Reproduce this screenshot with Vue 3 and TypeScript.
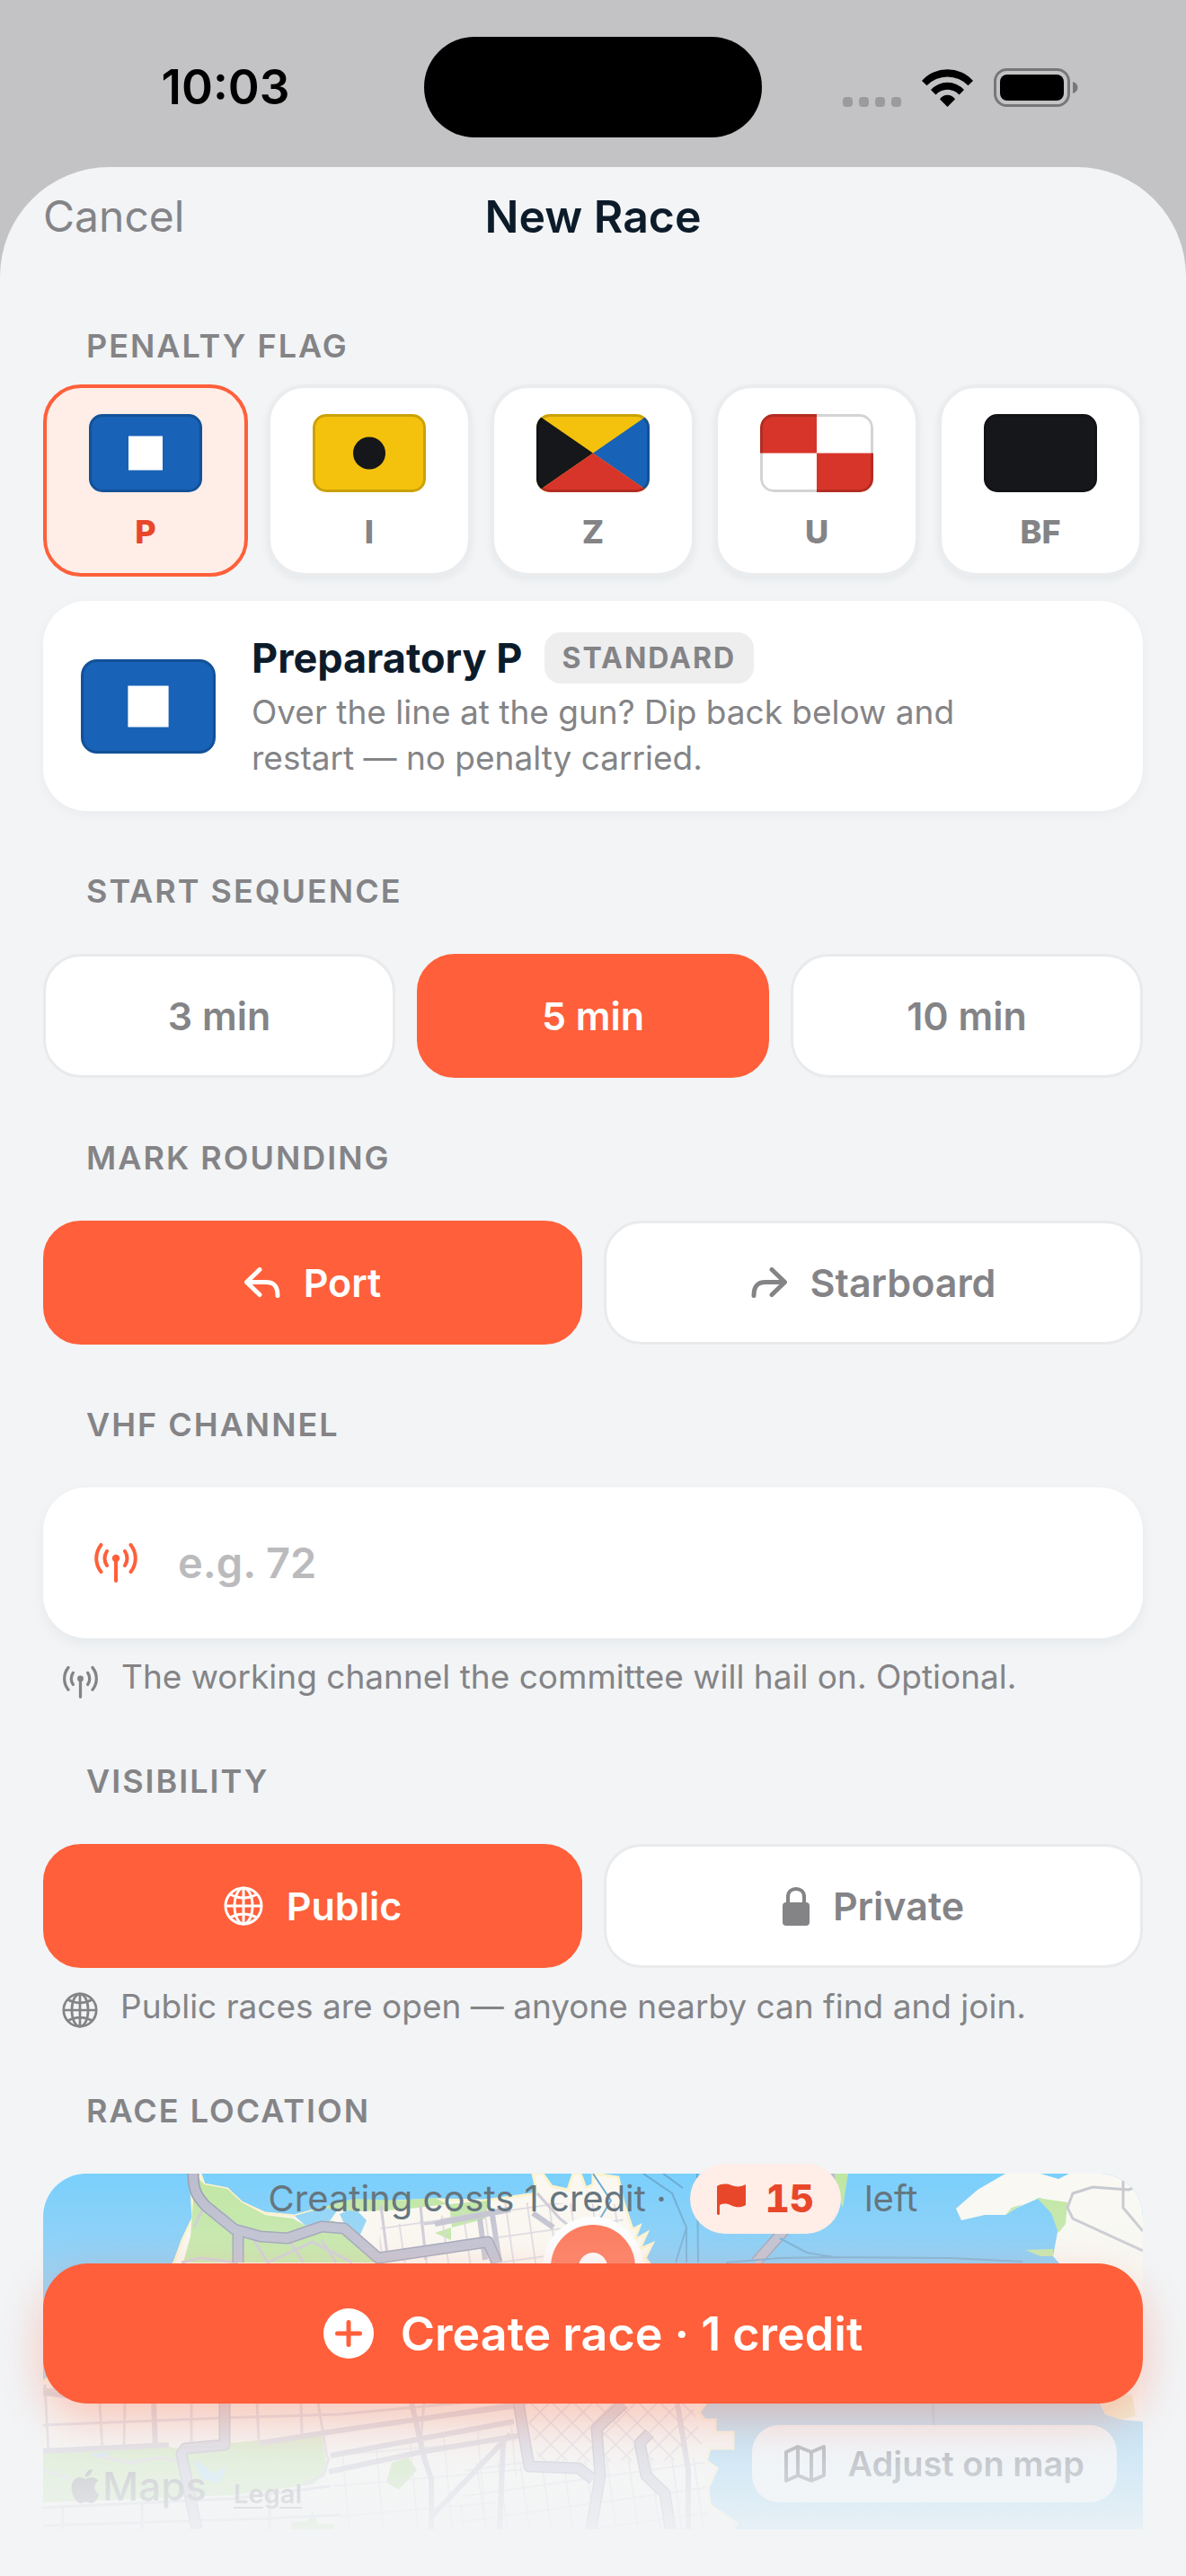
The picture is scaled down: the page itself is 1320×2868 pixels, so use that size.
<script setup lang="ts">
import { computed, ref } from 'vue'

interface Shape { d: string; fill: string }
interface Flag { code: string; title: string; badge: string; text: string; ground: string; shapes: Shape[] }

const BLUE = '#1862b7'
const YELLOW = '#f4c20d'
const RED = '#d8352a'
const BLACK = '#15171a'

const flags: Flag[] = [
  {
    code: 'P', title: 'Preparatory P', badge: 'STANDARD', ground: BLUE,
    text: 'Over the line at the gun? Dip back below and restart — no penalty carried.',
    shapes: [{ d: 'M44 24.500H82V62.500H44Z', fill: '#fff' }],
  },
  {
    code: 'I', title: 'India I', badge: 'ROUND THE ENDS', ground: YELLOW,
    text: 'Over in the last minute? Round an end of the line before starting.',
    shapes: [{ d: 'M45 43.500a18 18 0 1 0 36 0a18 18 0 1 0 -36 0Z', fill: BLACK }],
  },
  {
    code: 'Z', title: 'Zulu Z', badge: '20% PENALTY', ground: YELLOW,
    text: 'In the triangle in the last minute? A scoring penalty applies.',
    shapes: [
      { d: 'M0 0L63 43.500L0 87Z', fill: BLACK },
      { d: 'M126 0L63 43.500L126 87Z', fill: BLUE },
      { d: 'M0 87L63 43.500L126 87Z', fill: RED },
    ],
  },
  {
    code: 'U', title: 'Uniform U', badge: 'DISQUALIFIED', ground: '#fff',
    text: 'In the triangle in the last minute? Disqualified unless restarted.',
    shapes: [{ d: 'M0 0H63V43.500H0Z', fill: RED }, { d: 'M63 43.500H126V87H63Z', fill: RED }],
  },
  {
    code: 'BF', title: 'Black flag', badge: 'STRICT', ground: BLACK,
    text: 'In the triangle in the last minute? Disqualified, even after a restart.',
    shapes: [],
  },
]

const minutes = [3, 5, 10]
const flagCode = ref('P')
const sequence = ref(5)
const rounding = ref<'port' | 'starboard'>('port')
const visibility = ref<'public' | 'private'>('public')
const channel = ref('')
const credits = ref(15)

const activeFlag = computed(() => flags.find(f => f.code === flagCode.value) ?? flags[0])
const visibilityHint = computed(() =>
  visibility.value === 'public'
    ? 'Public races are open — anyone nearby can find and join.'
    : 'Private races are joined by invitation only.')
</script>

<template>
  <div class="screen">
    <header class="status">
      <div class="status-left"><span class="clock">10:03</span></div>
      <div class="island"></div>
      <div class="status-right">
        <svg class="dots" viewBox="0 0 65 11" aria-hidden="true">
          <rect v-for="n in 4" :key="n" :x="(n - 1) * 18" y="0" width="11" height="11" rx="4" fill="#9b9b9d" />
        </svg>
        <svg class="wifi" viewBox="0 0 57 42" aria-hidden="true">
          <path d="M0 13A38 38 0 0 1 57 13L51.500 18.300A32 32 0 0 0 5.500 18.300Z" />
          <path d="M10 23A25 25 0 0 1 47 23L41.500 28.500A17.500 17.500 0 0 0 15.500 28.500Z" />
          <path d="M20 33.500A10 10 0 0 1 37 33.500L28.500 42Z" />
        </svg>
        <svg class="battery" viewBox="0 0 94 43" aria-hidden="true">
          <rect x="1.500" y="1.500" width="82" height="40" rx="13" fill="none" stroke="#77777a" stroke-width="3" />
          <rect x="7" y="7" width="71" height="29" rx="8" />
          <path d="M88 15C91.500 16 93.500 18.500 93.500 21.500S91.500 27 88 28Z" fill="#77777a" />
        </svg>
      </div>
    </header>

    <main class="sheet">
      <div class="titlebar">
        <button type="button" class="cancel">Cancel</button>
        <h1>New Race</h1>
      </div>

      <div class="body">
        <h2 id="flag-label">PENALTY FLAG</h2>
        <div class="flags" role="group" aria-labelledby="flag-label">
          <button
            v-for="f in flags" :key="f.code" type="button" class="flag-card"
            :class="{ on: f.code === flagCode }" :aria-pressed="f.code === flagCode" @click="flagCode = f.code"
          >
            <span class="flag">
              <svg viewBox="0 0 126 87" preserveAspectRatio="none" aria-hidden="true">
                <rect width="126" height="87" :fill="f.ground" />
                <path v-for="s in f.shapes" :key="s.d" :d="s.d" :fill="s.fill" />
              </svg>
            </span>
            <span class="flag-code">{{ f.code }}</span>
          </button>
        </div>

        <section class="info">
          <span class="flag large">
            <svg viewBox="0 0 126 87" preserveAspectRatio="none" aria-hidden="true">
              <rect width="126" height="87" :fill="activeFlag.ground" />
              <path v-for="s in activeFlag.shapes" :key="s.d" :d="s.d" :fill="s.fill" />
            </svg>
          </span>
          <div class="info-text">
            <div class="info-head">
              <h3>{{ activeFlag.title }}</h3>
              <span class="badge">{{ activeFlag.badge }}</span>
            </div>
            <p>{{ activeFlag.text }}</p>
          </div>
        </section>

        <h2 id="seq-label" class="spaced">START SEQUENCE</h2>
        <div class="options" role="group" aria-labelledby="seq-label">
          <button
            v-for="m in minutes" :key="m" type="button" class="option"
            :class="{ on: m === sequence }" :aria-pressed="m === sequence" @click="sequence = m"
          >{{ m }} min</button>
        </div>

        <h2 id="round-label" class="spaced">MARK ROUNDING</h2>
        <div class="options" role="group" aria-labelledby="round-label">
          <button
            type="button" class="option" :class="{ on: rounding === 'port' }"
            :aria-pressed="rounding === 'port'" @click="rounding = 'port'"
          >
            <svg class="turn" viewBox="0 0 40 34" aria-hidden="true">
              <path d="M17 2.500L2.500 16.500L17 30.500M3 16.500H24C33 16.500 37 21 37 31.500" />
            </svg>
            Port
          </button>
          <button
            type="button" class="option" :class="{ on: rounding === 'starboard' }"
            :aria-pressed="rounding === 'starboard'" @click="rounding = 'starboard'"
          >
            <svg class="turn" viewBox="0 0 40 34" aria-hidden="true">
              <path d="M23 2.500L37.500 16.500L23 30.500M37 16.500H16C7 16.500 3 21 3 31.500" />
            </svg>
            Starboard
          </button>
        </div>

        <h2 class="spaced"><label for="vhf">VHF CHANNEL</label></h2>
        <div class="field">
          <svg class="antenna" viewBox="0 0 50 44" aria-hidden="true">
            <circle cx="25" cy="17" r="4.200" />
            <path d="M25 17V42M8.500 2A24 24 0 0 0 8.500 32M15 9A15 15 0 0 0 15 25M41.500 2A24 24 0 0 1 41.500 32M35 9A15 15 0 0 1 35 25" />
          </svg>
          <input id="vhf" v-model="channel" type="text" inputmode="numeric" placeholder="e.g. 72">
        </div>
        <p class="hint">
          <svg class="antenna" viewBox="0 0 50 44" aria-hidden="true">
            <circle cx="25" cy="17" r="4.200" />
            <path d="M25 17V42M8.500 2A24 24 0 0 0 8.500 32M15 9A15 15 0 0 0 15 25M41.500 2A24 24 0 0 1 41.500 32M35 9A15 15 0 0 1 35 25" />
          </svg>
          <span>The working channel the committee will hail on. Optional.</span>
        </p>

        <h2 id="vis-label" class="spaced">VISIBILITY</h2>
        <div class="options" role="group" aria-labelledby="vis-label">
          <button
            type="button" class="option" :class="{ on: visibility === 'public' }"
            :aria-pressed="visibility === 'public'" @click="visibility = 'public'"
          >
            <svg class="globe" viewBox="0 0 44 44" aria-hidden="true">
              <circle cx="22" cy="22" r="20" />
              <ellipse cx="22" cy="22" rx="10" ry="20" />
              <path d="M22 2V42M2 22H42M7 9Q22 17 37 9M7 35Q22 27 37 35" />
            </svg>
            Public
          </button>
          <button
            type="button" class="option" :class="{ on: visibility === 'private' }"
            :aria-pressed="visibility === 'private'" @click="visibility = 'private'"
          >
            <svg class="lock" viewBox="0 0 30 43" aria-hidden="true">
              <rect y="17" width="30" height="26" rx="4" fill="currentColor" />
              <path d="M6 19V11C6 5 10 2 15 2S24 5 24 11V19" fill="none" stroke="currentColor" stroke-width="4" />
            </svg>
            Private
          </button>
        </div>
        <p class="hint">
          <svg class="globe" viewBox="0 0 44 44" aria-hidden="true">
            <circle cx="22" cy="22" r="20" />
            <ellipse cx="22" cy="22" rx="10" ry="20" />
            <path d="M22 2V42M2 22H42M7 9Q22 17 37 9M7 35Q22 27 37 35" />
          </svg>
          <span>{{ visibilityHint }}</span>
        </p>

        <h2 class="spaced">RACE LOCATION</h2>
        <section class="map">
          <svg class="map-art" viewBox="0 0 1224 396" preserveAspectRatio="xMidYMid slice" aria-hidden="true">
            <defs>
              <linearGradient id="sea" x1="0" y1="0" x2="0" y2="1">
                <stop offset="0" stop-color="#70cdfd" />
                <stop offset="0.300" stop-color="#72c3f4" />
                <stop offset="1" stop-color="#74c8f2" />
              </linearGradient>
              <pattern id="hatch" width="17" height="17" patternUnits="userSpaceOnUse" patternTransform="rotate(45)">
                <path d="M0 0H17M0 0V17" fill="none" stroke="#cdc0ce" stroke-width="3" />
              </pattern>
              <pattern id="blocks" width="24" height="28" patternUnits="userSpaceOnUse" patternTransform="rotate(-8)">
                <path d="M0 0H24M0 0V28" fill="none" stroke="#d4d0da" stroke-width="3" />
              </pattern>
              <pattern id="south" width="38" height="34" patternUnits="userSpaceOnUse" patternTransform="rotate(-5)">
                <path d="M0 0H38M0 0V34" fill="none" stroke="#c6c4d2" stroke-width="3" />
              </pattern>
            </defs>
            <rect width="1224" height="396" fill="url(#sea)" />

            <!-- peninsula -->
            <path
              d="M164 0H175L179 12L205 17L221 32L247 44L280 47L301 41L331 36L373 32L436 29L491 30L550 22L545 0H556L566 14L584 18L590 0H598L604 16L612 12L612 0L640 4L646 32L656 62L664 58L658 74L672 66L664 84L678 78L670 94L690 120L735 230L738 255L730 266L736 274H748V288H768V306H742L738 320L750 328L740 350L742 369L772 389L768 396H0V232L60 180L146 99L155 74L167 49Z"
              fill="#fcf8f0" stroke="#fff3c8" stroke-width="3"
            />
            <path d="M330 45L346 38L360 52L352 70L338 62Z" fill="#84cff6" />
            <path d="M280 47L301 41L331 36L318 54L292 58Z" fill="#84cff6" />

            <!-- parks -->
            <path
              d="M169 0L179 12L205 17L221 32L247 46L278 50L296 60L322 52L340 62L352 78L373 99H156L164 70L167 30Z"
              fill="#bce59c"
            />
            <path d="M309 38L345 28L395 30L436 27L450 34L400 40L350 42Z" fill="#bce59c" />
            <path d="M452 34L495 30L493 50L455 60Z" fill="#bce59c" />
            <path d="M436 66L454 60V74Z" fill="#bce59c" />
            <path d="M0 312L140 304L160 308L208 300L310 290L316 332L300 346L210 358L0 366Z" fill="#b9e39b" />
            <path d="M388 322L406 316L416 330L396 352L382 344Z" fill="#a9dc85" />
            <path d="M300 376L306 390H324V396H276V388L294 387Z" fill="#a9dc85" />
            <path d="M168 318L190 334L204 326L196 344L176 340ZM52 312L76 310L66 318Z" fill="#9fd8f5" />

            <!-- fine streets -->
            <path d="M375 60L520 32L640 34L652 70L680 130L374 96Z" fill="url(#blocks)" />
            <path d="M535 256H722L734 300L700 320H552Z" fill="url(#hatch)" />
            <path d="M470 322L736 316L740 396H462Z" fill="url(#blocks)" />
            <path d="M318 312L520 276L536 326L478 396H330Z" fill="url(#south)" opacity="0.700" />
            <g fill="none" stroke="#c9c6d2" stroke-width="3">
              <path d="M2 235L6 312M63 255L66 308M91 255L90 306M165 255V302M238 255L240 300M287 255L288 290M306 255L316 316M424 255L420 300" />
              <path d="M0 280L200 272L330 268L540 248M242 299L524 256M0 240L60 244" />
              <path d="M0 372L210 362L320 348M0 392L250 384L330 380M22 370V396M110 366V396M252 352V396" />
              <path d="M0 330L30 340M60 314L96 322L130 316L160 322M318 316L312 336L290 346" />
              <path d="M376 36L384 98M420 36L426 96M442 52L520 38M424 56L442 54M230 66L250 99M272 72L290 99M310 74L326 99M250 99L300 76L344 99M181 36L205 48L216 62M154 99L175 94L217 99" />
              <path d="M168 60L181 32M550 22L575 50L600 70" />
            </g>
            <g fill="none" stroke="#bdbccb" stroke-width="6">
              <path d="M123 255L125 306M0 244L48 250M0 309L140 302" />
              <path d="M242 300L330 286L528 258M320 314L524 276M318 332L420 310L540 290" />
              <path d="M410 255L424 316L432 340V396M432 382L520 290M512 300L508 396" />
              <path d="M486 50L492 96M500 46L508 99M436 56L520 40M545 44L568 60" />
              <path d="M706 256L718 330V396" />
            </g>

            <!-- highways -->
            <g fill="none" stroke-linejoin="round">
              <g stroke="#9296ad" stroke-width="13">
                <path d="M167 0C167 20 172 26 181 36L213 62L242 70L272 72L310 59L335 61L373 94L495 76L505 99" />
                <path d="M217 66V99M202 255V302L158 306L154 312L171 396M529 255L541 326L596 328L612 340M646 256L616 284L620 336L610 396M675 289L664 300L671 336L692 356L698 396M881 0L793 99" />
              </g>
              <g stroke="#b6b8ca" stroke-width="10">
                <path d="M167 0C167 20 172 26 181 36L213 62L242 70L272 72L310 59L335 61L373 94L495 76L505 99" />
                <path d="M217 66V99M202 255V302L158 306L154 312L171 396M529 255L541 326L596 328L612 340M646 256L616 284L620 336L610 396M675 289L664 300L671 336L692 356L698 396M881 0L793 99" />
              </g>
            </g>

            <!-- ferry routes -->
            <path
              d="M612 0L632 30L614 60M668 0L700 22L716 60V99M690 0L712 16M728 0L729 99M716 60L704 99M820 72L850 88L880 93L1010 94L1090 98M760 99L820 94L880 93M990 255L992 290"
              fill="none" stroke="#5fa3cf" stroke-width="2"
            />

            <!-- east bay -->
            <path d="M881 0H896L894 12L890 38L884 24Z" fill="#bce59c" />
            <path
              d="M1071 0L1040 18L1016 39L1022 52L1048 46L1071 46L1084 38L1109 27L1122 32L1130 60L1124 92L1140 110L1176 255L1182 268L1200 274L1224 276V0H1142L1130 6L1110 0Z"
              fill="#faf9f2"
            />
            <path d="M1071 46L1078 38L1090 34ZM1106 27L1140 32L1138 56L1130 66L1122 44ZM1093 85L1124 84V92H1110Z" fill="#bce59c" />
            <path d="M1176 250L1212 246L1216 270L1200 274L1182 268Z" fill="#eee0a4" />
            <path d="M1202 8V38L1224 64M1224 12L1208 18L1168 15L1146 22L1140 38L1146 50L1224 86" fill="none" stroke="#c3c4cc" stroke-width="3" />

            <!-- pin -->
            <circle cx="612" cy="104" r="56" fill="#fff" />
            <circle cx="612" cy="104" r="47" fill="#ff5f3a" />
            <circle cx="612" cy="104" r="16" fill="#fff" />
          </svg>
          <div class="map-credit">
            <span class="maps">
              <svg viewBox="0 0 24 24" aria-hidden="true">
                <path d="M12.152 6.896c-.948 0-2.415-1.078-3.960-1.040-2.040.027-3.910 1.183-4.961 3.014-2.117 3.675-.546 9.103 1.519 12.090 1.013 1.454 2.208 3.090 3.792 3.039 1.520-.065 2.090-.987 3.935-.987 1.831 0 2.350.987 3.960.948 1.637-.026 2.676-1.480 3.676-2.948 1.156-1.688 1.636-3.325 1.662-3.415-.039-.013-3.182-1.221-3.220-4.857-.026-3.040 2.480-4.494 2.597-4.559-1.429-2.090-3.623-2.324-4.390-2.376-2-.156-3.675 1.090-4.610 1.090zM15.530 3.830c.843-1.012 1.400-2.427 1.245-3.830-1.207.052-2.662.805-3.532 1.818-.780.896-1.454 2.338-1.273 3.714 1.338.104 2.715-.688 3.559-1.701" />
              </svg>
              Maps
            </span>
            <a href="#legal">Legal</a>
          </div>
          <button type="button" class="adjust">
            <svg viewBox="0 0 46 42" aria-hidden="true">
              <path d="M2 8L15 2L30 8L44 2V34L30 40L15 34L2 40ZM15 2V34M30 8V40" />
            </svg>
            Adjust on map
          </button>
        </section>
      </div>
    </main>

    <footer class="dock">
      <p class="cost">
        <span>Creating costs 1 credit ·</span>
        <span class="credits">
          <svg viewBox="0 0 32 35" aria-hidden="true">
            <path d="M0 3C5 0 11 0 16 2S27 4 32 1V24C27 27 21 27 16 24.500S7 22 3 24V33.500A1.500 1.500 0 0 1 0 33.500Z" />
          </svg>
          {{ credits }}
        </span>
        <span>left</span>
      </p>
      <button type="button" class="create">
        <svg viewBox="0 0 56 56" aria-hidden="true">
          <circle cx="28" cy="28" r="28" fill="#fff" />
          <path d="M28 15.500V40.500M15.500 28H40.500" stroke="#ff5f3a" stroke-width="5" stroke-linecap="round" />
        </svg>
        Create race · 1 credit
      </button>
    </footer>
  </div>
</template>

<style>
body {
  margin: 0;
  background: #c3c3c5;
}
</style>

<style scoped>
.screen {
  position: relative;
  display: flex;
  flex-direction: column;
  min-height: 100vh;
  overflow: hidden;
  background: #c3c3c5;
  color: #848487;
  font-family: Inter, "Liberation Sans", sans-serif;
}
.screen *,
.screen *::after {
  box-sizing: border-box;
}
button {
  padding: 0;
  border: 0;
  background: none;
  color: inherit;
  font-family: inherit;
  cursor: pointer;
}
h1, h2, h3, p {
  margin: 0;
}
svg {
  flex: none;
  display: block;
}

/* status bar */
.status {
  display: grid;
  grid-template-columns: 1fr 376px 1fr;
  align-items: center;
  height: 186px;
  padding-top: 8px;
}
.status-left {
  padding-left: 30px;
  text-align: center;
}
.clock {
  color: #000;
  font-size: 53px;
  font-weight: 600;
  line-height: 64px;
}
.island {
  height: 112px;
  border-radius: 56px;
  background: #000;
}
.status-right {
  display: flex;
  align-items: flex-end;
  justify-content: center;
  gap: 23px;
  padding-right: 30px;
}
.dots {
  width: 65px;
  height: 11px;
}
.wifi {
  width: 57px;
  height: 42px;
}
.battery {
  width: 94px;
  height: 43px;
}

/* sheet */
.sheet {
  flex: 1;
  padding-bottom: 48px;
  border-radius: 122px 122px 0 0;
  background: #f2f4f6;
}
.titlebar {
  display: grid;
  grid-template-columns: 1fr auto 1fr;
  align-items: center;
  height: 110px;
  padding: 0 48px;
}
.cancel {
  justify-self: start;
  font-size: 48px;
  line-height: 60px;
}
h1 {
  color: #0c1b2a;
  font-size: 50px;
  font-weight: 600;
  line-height: 60px;
}
.body {
  padding: 65px 48px 0;
}
h2 {
  margin-bottom: 46px;
  padding-left: 48px;
  font-size: 36px;
  font-weight: 600;
  line-height: 48px;
  letter-spacing: 2px;
}
#flag-label {
  margin-bottom: 19px;
}
.spaced {
  margin-top: 65px;
}

/* flags */
.flags {
  display: flex;
  gap: 21px;
}
.flag-card {
  display: flex;
  flex: 1;
  flex-direction: column;
  align-items: center;
  height: 214px;
  padding-top: 29px;
  border: 4px solid #ebecee;
  border-radius: 42px;
  background: #fff;
  box-shadow: 0 4px 10px rgba(20, 30, 40, 0.050);
}
.flag-card.on {
  border-color: #ff5f3a;
  background: #ffede7;
  color: #e8472a;
  box-shadow: none;
}
.flag {
  position: relative;
  width: 126px;
  height: 87px;
  overflow: hidden;
  border-radius: 15px;
}
.flag svg {
  width: 100%;
  height: 100%;
}
.flag::after {
  position: absolute;
  inset: 0;
  border: 3px solid rgba(0, 0, 0, 0.170);
  border-radius: inherit;
  content: "";
}
.flag.large {
  flex: none;
  width: 150px;
  height: 105px;
  border-radius: 18px;
}
.flag-code {
  margin-top: 22px;
  font-size: 36px;
  font-weight: 800;
  line-height: 44px;
}
.info {
  display: flex;
  align-items: center;
  gap: 40px;
  margin-top: 27px;
  padding: 35px 42px 34px;
  border-radius: 48px;
  background: #fff;
  box-shadow: 0 4px 14px rgba(20, 30, 40, 0.040);
}
.info-head {
  display: flex;
  align-items: center;
  gap: 24px;
  margin-bottom: 6px;
}
h3 {
  color: #0c1b2a;
  font-size: 45px;
  font-weight: 700;
  line-height: 57px;
}
.badge {
  padding: 0 20px;
  border-radius: 18px;
  background: #eeeeef;
  font-size: 32px;
  font-weight: 700;
  line-height: 57px;
  letter-spacing: 2px;
}
.info p {
  max-width: 840px;
  font-size: 37px;
  line-height: 51px;
}

/* option buttons */
.options {
  display: flex;
  gap: 24px;
}
.option {
  display: flex;
  flex: 1;
  align-items: center;
  justify-content: center;
  gap: 26px;
  height: 138px;
  border: 3px solid #e9eaec;
  border-radius: 42px;
  background: #fff;
  font-size: 43px;
  font-weight: 600;
}
.option.on {
  border-color: #ff5f3a;
  background: #ff5f3a;
  color: #fff;
}
.turn {
  width: 40px;
  height: 34px;
  fill: none;
  stroke: currentColor;
  stroke-width: 5;
  stroke-linecap: round;
  stroke-linejoin: round;
}
.globe {
  width: 44px;
  height: 44px;
  fill: none;
  stroke: currentColor;
  stroke-width: 3;
}
.lock {
  width: 30px;
  height: 43px;
}
.antenna {
  width: 50px;
  height: 44px;
  fill: none;
  stroke: currentColor;
  stroke-width: 4;
  stroke-linecap: round;
}
.antenna circle {
  fill: currentColor;
  stroke: none;
}

/* channel field */
.field {
  display: flex;
  align-items: center;
  gap: 44px;
  height: 168px;
  padding: 0 56px;
  border-radius: 48px;
  background: #fff;
  box-shadow: 0 6px 16px rgba(20, 30, 40, 0.050);
  color: #ff5f3a;
}
.field input {
  flex: 1;
  min-width: 0;
  padding: 0;
  border: 0;
  outline: 0;
  background: none;
  color: #0c1b2a;
  font-family: inherit;
  font-size: 47px;
  font-weight: 600;
  line-height: 60px;
}
.field input::placeholder {
  color: #bbbbbd;
  opacity: 1;
}
.hint {
  display: flex;
  align-items: flex-end;
  gap: 25px;
  height: 51px;
  margin-top: 19px;
  padding: 0 0 3px 21px;
  font-size: 37px;
  line-height: 48px;
}
.hint .antenna {
  width: 41px;
  height: 36px;
}
.hint .globe {
  width: 40px;
  height: 40px;
}

/* map */
.map {
  position: relative;
  height: 396px;
  overflow: hidden;
  border-radius: 48px 48px 0 0;
}
.map-art {
  width: 100%;
  height: 100%;
}
.map-credit {
  position: absolute;
  bottom: 20px;
  left: 28px;
  display: flex;
  align-items: baseline;
  gap: 30px;
  color: #6d7074;
}
.maps {
  display: flex;
  align-items: center;
  font-size: 44px;
  font-weight: 500;
  line-height: 56px;
}
.maps svg {
  width: 38px;
  height: 38px;
  fill: currentColor;
}
.map-credit a {
  color: inherit;
  font-size: 29px;
  font-weight: 600;
  text-underline-offset: 4px;
}
.adjust {
  position: absolute;
  right: 29px;
  bottom: 30px;
  display: flex;
  align-items: center;
  gap: 24px;
  height: 86px;
  padding: 0 36px;
  border-radius: 30px;
  background: rgba(255, 255, 255, 0.860);
  color: #3c4653;
  font-size: 38px;
  font-weight: 600;
}
.adjust svg {
  width: 46px;
  height: 42px;
  fill: none;
  stroke: currentColor;
  stroke-width: 4;
  stroke-linejoin: round;
}

/* bottom dock */
.dock {
  position: absolute;
  right: 0;
  bottom: 0;
  left: 0;
  padding: 24px 48px 192px;
  background: linear-gradient(rgba(242, 244, 246, 0), rgba(242, 244, 246, 0.920) 90%, #f2f4f6);
}
.cost {
  display: flex;
  align-items: center;
  justify-content: center;
  gap: 26px;
  color: #66767f;
  font-size: 40px;
  line-height: 48px;
}
.credits {
  display: flex;
  align-items: center;
  gap: 22px;
  height: 78px;
  padding: 0 30px;
  border-radius: 39px;
  background: #ffede7;
  color: #e8472a;
  font-size: 42px;
  font-weight: 800;
  font-variant-numeric: tabular-nums;
}
.credits svg {
  width: 32px;
  height: 35px;
  fill: currentColor;
}
.create {
  display: flex;
  align-items: center;
  justify-content: center;
  gap: 30px;
  width: 100%;
  height: 156px;
  margin-top: 33px;
  border-radius: 50px;
  background: #ff5f3a;
  box-shadow: 0 18px 48px rgba(255, 95, 58, 0.320);
  color: #fff;
  font-size: 52px;
  font-weight: 600;
}
.create svg {
  width: 56px;
  height: 56px;
}
</style>
